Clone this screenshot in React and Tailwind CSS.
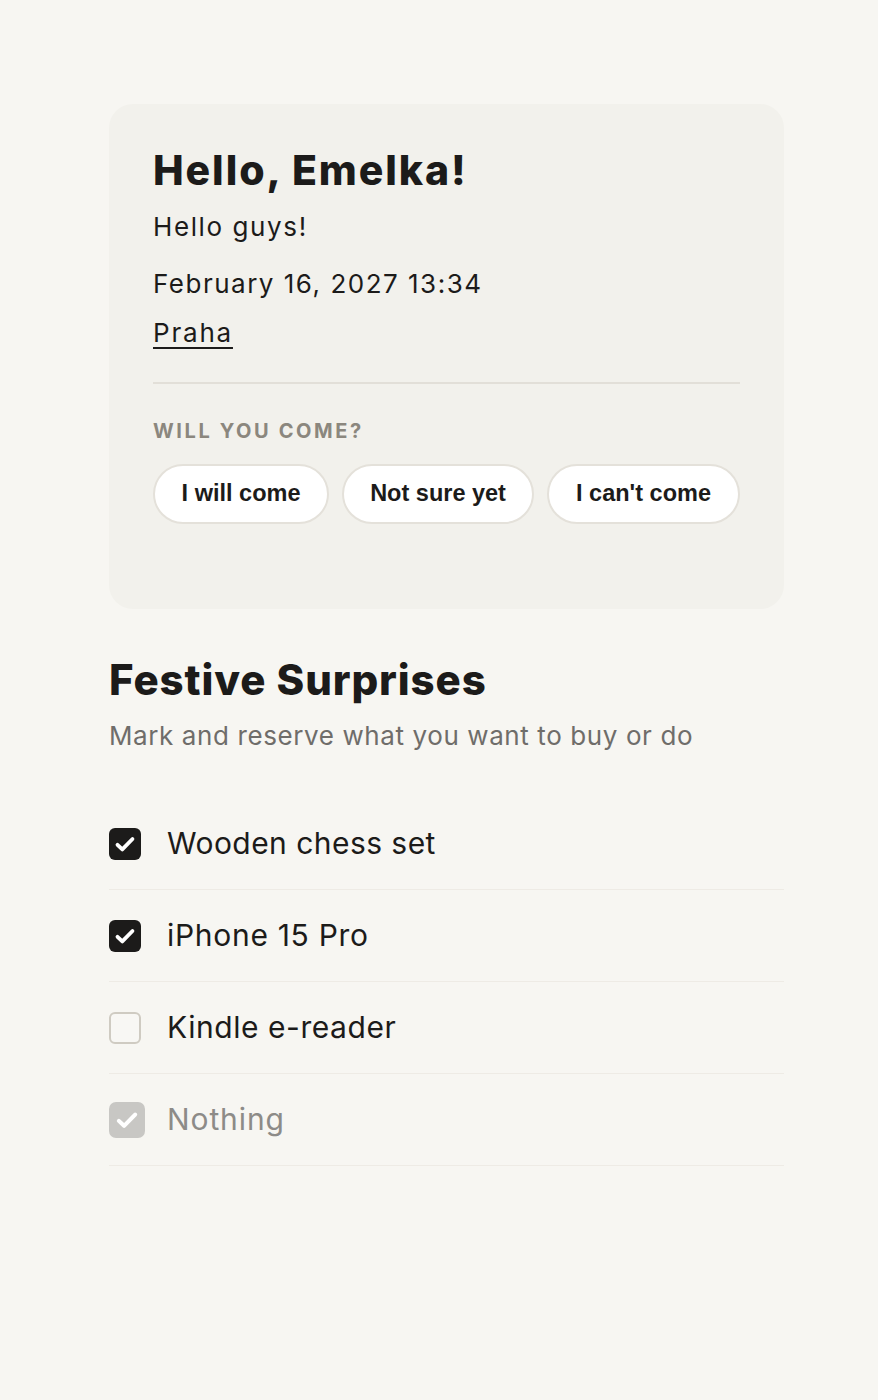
import React from 'react';

const items = [
  { label: 'Wooden chess set', state: 'checked', track: 'tracking-[0.45px]' },
  { label: 'iPhone 15 Pro', state: 'checked', track: 'tracking-[0.7px]' },
  { label: 'Kindle e-reader', state: 'empty', track: 'tracking-[0.55px]' },
  { label: 'Nothing', state: 'disabled', track: 'tracking-[0.9px]' },
];

function Check({ state }) {
  if (state === 'empty') {
    return <div className="w-[32px] h-[32px] rounded-[6px] border-2 border-[#cfcbc2] bg-[#f8f7f4] shrink-0" />;
  }
  const dis = state === 'disabled';
  return (
    <div
      className={
        dis
          ? 'w-[36px] h-[36px] rounded-[7px] bg-[#c8c7c4] flex items-center justify-center shrink-0 -mr-[4px]'
          : 'w-[32px] h-[32px] rounded-[6px] bg-[#1c1b1a] flex items-center justify-center shrink-0'
      }
    >
      <svg width={dis ? 26 : 24} height={dis ? 26 : 24} viewBox="0 0 24 24" fill="none">
        <path d="M4.5 12.8l4.8 4.6L19.5 7" stroke="white" strokeWidth="3.8" strokeLinecap="round" strokeLinejoin="round" />
      </svg>
    </div>
  );
}

export default function App() {
  return (
    <div className="min-h-screen bg-[#f7f6f2] pt-[104px] pb-20" style={{ fontFamily: 'Inter, "Noto Sans", sans-serif' }}>
      <div className="ml-[109px] w-[675px]">
        {/* Invite card */}
        <div className="bg-[#f2f1ec] rounded-[24px] pt-[42px] pb-[85px] px-[44px]">
          <h1 className="text-[41px] leading-[48px] font-extrabold text-[#1c1b1a] tracking-[1.9px]">Hello, Emelka!</h1>
          <p className="text-[26px] leading-[36px] text-[#1c1b1a] mt-[15px] tracking-[1.6px]">Hello guys!</p>
          <p className="text-[26px] leading-[36px] text-[#1c1b1a] mt-[21px] tracking-[1.5px]">February 16, 2027 13:34</p>
          <a className="inline-block text-[26px] leading-[36px] text-[#1c1b1a] underline underline-offset-[5px] decoration-[2px] mt-[13px] tracking-[1.8px]">Praha</a>
          <div className="h-[2px] bg-[#e2dfd8] mt-[31px]" />
          <div className="mt-[35px] text-[20px] leading-[24px] font-bold tracking-[2.6px] text-[#8b877e]">WILL YOU COME?</div>
          <div className="flex gap-[13px] mt-[21px]" style={{ fontFamily: '"Liberation Sans", Arial, sans-serif' }}>
            <button className="h-[60px] w-[177px] rounded-full bg-white border-2 border-[#e4e1da] text-[23.5px] font-bold text-[#1c1b1a]">I will come</button>
            <button className="h-[60px] w-[193px] rounded-full bg-white border-2 border-[#e4e1da] text-[23.5px] font-bold text-[#1c1b1a]">Not sure yet</button>
            <button className="h-[60px] w-[194px] rounded-full bg-white border-2 border-[#e4e1da] text-[23.5px] font-bold text-[#1c1b1a]">I can't come</button>
          </div>
        </div>

        {/* Wishlist */}
        <h2 className="mt-[46px] text-[42px] leading-[50px] font-extrabold text-[#1c1b1a] tracking-[0.9px]">Festive Surprises</h2>
        <p className="mt-[13px] text-[26px] leading-[36px] text-[#6f6d6a] tracking-[0.6px]">Mark and reserve what you want to buy or do</p>

        <div className="mt-[44px]">
          {items.map((it) => (
            <div key={it.label} className="h-[92px] flex items-center gap-[26px] border-b border-[#eeebe5]">
              <Check state={it.state} />
              <span className={(it.state === 'disabled' ? 'text-[30px] text-[#8d8b88] ' : 'text-[30px] text-[#1c1b1a] ') + it.track}>
                {it.label}
              </span>
            </div>
          ))}
        </div>
      </div>
    </div>
  );
}
